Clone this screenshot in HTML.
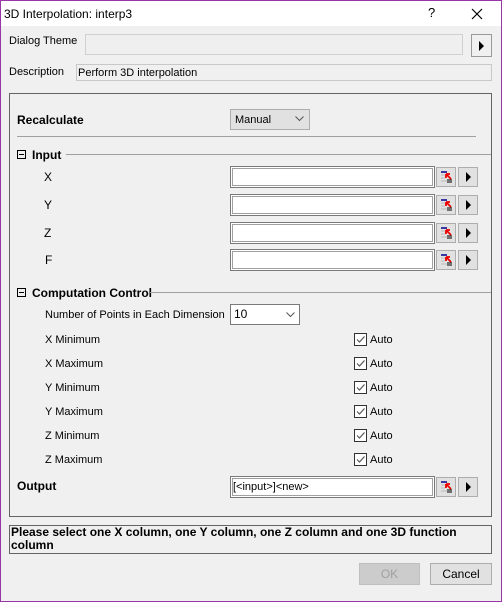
<!DOCTYPE html>
<html><head><style>
*{box-sizing:border-box;margin:0;padding:0}
body{width:502px;height:602px;background:#f0f0f0;font-family:"Liberation Sans",sans-serif;font-size:11px;color:#000;position:relative;overflow:hidden}
.a{position:absolute}
.t{position:absolute;white-space:nowrap;line-height:14px}
.b{font-weight:bold;font-size:12px}
.inp{position:absolute;background:#fff;border:1px solid #7a7a7a;box-shadow:inset 0 0 0 1px #fff,inset 0 0 0 2px #a0a0a0}
.btn{position:absolute;background:#e1e1e1;border:1px solid #adadad}
.arr{position:absolute;left:7px;top:5px;width:0;height:0;border-left:5px solid #000;border-top:5px solid transparent;border-bottom:5px solid transparent}
.chk{position:absolute;width:13px;height:13px;border:1px solid #333;background:#fff}
.dd{position:absolute;border:1px solid #7a7a7a;background:#fff}
</style></head><body>
<div class="a" style="left:0;top:0;width:502px;height:602px;border:1px solid #9a35a5"></div>
<div class="a" style="left:1px;top:1px;width:500px;height:25px;background:#fff"></div>
<div class="t" style="left:4px;top:7px;font-size:12px">3D Interpolation: interp3</div>
<div class="t" style="left:428px;top:6px;font-size:13px">?</div>
<svg class="a" style="left:471px;top:8px" width="12" height="12"><path d="M1 1L11 11M11 1L1 11" stroke="#000" stroke-width="1.2"/></svg>

<div class="t" style="left:9px;top:34px">Dialog Theme</div>
<div class="a" style="left:85px;top:34px;width:378px;height:21px;border:1px solid #d0d0d0;background:#efefef"></div>
<div class="btn" style="left:471px;top:34px;width:21px;height:23px;border-color:#999;background:#f0f0f0"><div class="arr" style="left:7px;top:6px"></div></div>

<div class="t" style="left:9px;top:65px">Description</div>
<div class="a" style="left:76px;top:64px;width:416px;height:17px;border:1px solid #c8c8c8;background:#f0f0f0"></div>
<div class="t" style="left:78px;top:66px">Perform 3D interpolation</div>

<div class="a" style="left:9px;top:93px;width:483px;height:424px;border:1px solid #646464"></div>

<div class="t b" style="left:17px;top:113px">Recalculate</div>
<div class="a" style="left:230px;top:109px;width:80px;height:21px;border:1px solid #adadad;background:#e1e1e1"></div>
<div class="t" style="left:235px;top:113px">Manual</div>
<svg class="a" style="left:295px;top:116px" width="9" height="6"><path d="M0.5 0.5L4.5 4.5L8.5 0.5" stroke="#555" fill="none"/></svg>
<div class="a" style="left:17px;top:136px;width:459px;height:1px;background:#a0a0a0"></div>

<div class="a" style="left:17px;top:150px;width:9px;height:9px;border:1px solid #000"></div>
<div class="a" style="left:19px;top:154px;width:5px;height:1px;background:#000"></div>
<div class="t b" style="left:32px;top:148px">Input</div>
<div class="a" style="left:66px;top:154px;width:425px;height:1px;background:#a0a0a0"></div>

<div class="t" style="left:44px;top:170px;font-size:12px">X</div>
<div class="t" style="left:44px;top:198px;font-size:12px">Y</div>
<div class="t" style="left:44px;top:226px;font-size:12px">Z</div>
<div class="t" style="left:45px;top:253px;font-size:12px">F</div>

<div class="a" style="left:17px;top:288px;width:9px;height:9px;border:1px solid #000"></div>
<div class="a" style="left:19px;top:292px;width:5px;height:1px;background:#000"></div>
<div class="t b" style="left:32px;top:286px">Computation Control</div>
<div class="a" style="left:150px;top:292px;width:341px;height:1px;background:#a0a0a0"></div>

<div class="t" style="left:45px;top:308px">Number of Points in  Each Dimension</div>
<div class="dd" style="left:230px;top:304px;width:70px;height:21px"></div>
<div class="t" style="left:234px;top:307px;font-size:12px">10</div>
<svg class="a" style="left:286px;top:312px" width="9" height="6"><path d="M0.5 0.5L4.5 4.5L8.5 0.5" stroke="#555" fill="none"/></svg>

<div class="t" style="left:45px;top:333px">X Minimum</div>
<div class="t" style="left:45px;top:357px">X Maximum</div>
<div class="t" style="left:45px;top:381px">Y Minimum</div>
<div class="t" style="left:45px;top:405px">Y Maximum</div>
<div class="t" style="left:45px;top:429px">Z Minimum</div>
<div class="t" style="left:45px;top:453px">Z Maximum</div>

<div class="t b" style="left:17px;top:479px">Output</div>

<div class="a" style="left:9px;top:525px;width:483px;height:29px;border:1px solid #646464"></div>
<div class="t b" style="left:11px;top:526px;line-height:13px">Please select one X column, one Y column, one Z column and one 3D function<br>column</div>

<div class="a" style="left:359px;top:563px;width:61px;height:22px;border:1px solid #bfbfbf;background:#cccccc"></div>
<div class="t" style="left:359px;top:567px;width:61px;text-align:center;color:#a0a0a0;font-size:12px">OK</div>
<div class="a" style="left:430px;top:563px;width:62px;height:22px;border:1px solid #adadad;background:#e1e1e1"></div>
<div class="t" style="left:430px;top:567px;width:62px;text-align:center;font-size:12px">Cancel</div>

<div id="rows"></div>
<script>
var ys=[166,194,222,249,476],h='';
ys.forEach(function(y,i){
h+='<div class="inp" style="left:230px;top:'+y+'px;width:205px;height:22px"></div>';
if(i==4)h+='<div class="t" style="left:233px;top:'+(y+4)+'px">[&lt;input&gt;]&lt;new&gt;</div>';
h+='<div class="btn" style="left:436px;top:'+(y+1)+'px;width:20px;height:20px"><svg style="position:absolute;left:2px;top:2px" width="14" height="14"><path d="M2 2H8" stroke="#00008b" stroke-width="1.5"/><path d="M2 5H6M2 8H6M2 11H8" stroke="#bbb"/><path d="M8 12H13M8 10H13" stroke="#000"/><path d="M7 4L12 9M7 4V8M7 4H11" stroke="#e00" stroke-width="1.8"/></svg></div>';
h+='<div class="btn" style="left:458px;top:'+(y+1)+'px;width:20px;height:20px"><div class="arr" style="left:7px;top:4px"></div></div>';
});
[333,357,381,405,429,453].forEach(function(y){
h+='<div class="chk" style="left:354px;top:'+y+'px"><svg width="11" height="11" style="position:absolute;left:0;top:0"><path d="M2 5.5L4.5 8L9.5 2.5" stroke="#555" fill="none" stroke-width="1.2"/></svg></div>';
h+='<div class="t" style="left:370px;top:'+y+'px">Auto</div>';
});
document.getElementById('rows').innerHTML=h;
</script>
</body></html>
